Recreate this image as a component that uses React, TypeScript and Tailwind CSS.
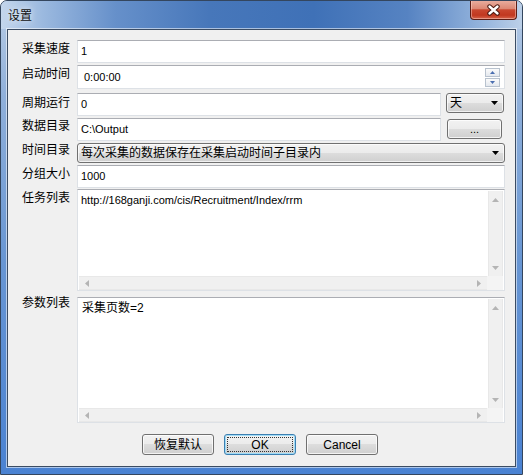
import React from "react";

const FONT = "font-['Liberation_Sans','Noto_Sans_CJK_SC',sans-serif]";

function DownTri({ color = "#000" }: { color?: string }) {
  return (
    <svg width="7" height="4" viewBox="0 0 7 4">
      <path d="M0 0 H7 L3.5 4 Z" fill={color} />
    </svg>
  );
}

function Arrow({ dir }: { dir: "up" | "down" | "left" | "right" }) {
  const d =
    dir === "up"
      ? "M0 4 H7 L3.5 0 Z"
      : dir === "down"
      ? "M0 0 H7 L3.5 4 Z"
      : dir === "left"
      ? "M4 0 V7 L0 3.5 Z"
      : "M0 0 V7 L4 3.5 Z";
  const w = dir === "up" || dir === "down" ? 7 : 4;
  const h = dir === "up" || dir === "down" ? 4 : 7;
  return (
    <svg width={w} height={h} viewBox={`0 0 ${w} ${h}`}>
      <path d={d} fill="#b4b4b4" />
    </svg>
  );
}

function TextBox({ value, h = "h-[23px]", extra = "" }: { value: string; h?: string; extra?: string }) {
  return (
    <div
      className={`${h} flex-1 bg-white border border-[#dde1e6] border-t-[#abadb3] flex items-center pl-[3px] text-[11px] leading-[13px] ${extra}`}
    >
      {value}
    </div>
  );
}

function Combo({ text, w, h = "h-[20px]" }: { text: string; w: string; h?: string }) {
  return (
    <div
      className={`${w} ${h} rounded-[3px] border border-[#707070] bg-[linear-gradient(180deg,#f2f2f2_0%,#ebebeb_50%,#dddddd_50%,#cfcfcf_100%)] shadow-[inset_0_0_0_1px_rgba(255,255,255,0.7)] flex items-center pl-[3px] pr-[5px]`}
    >
      <span className="flex-1 text-[12px] leading-[14px] whitespace-nowrap overflow-hidden">{text}</span>
      <DownTri />
    </div>
  );
}

function Label({ text, cls = "" }: { text: string; cls?: string }) {
  return <div className={`w-[55px] shrink-0 text-[12px] leading-[16px] ${cls}`}>{text}</div>;
}

function ScrollArea({ text, h, tcls }: { text: string; h: string; tcls: string }) {
  return (
    <div className={`${h} flex-1 flex flex-col bg-white border border-[#dde1e6] border-t-[#abadb3]`}>
      <div className="flex-1 flex">
        <div className={`flex-1 pl-[3px] whitespace-nowrap overflow-hidden ${tcls}`}>{text}</div>
        <div className="w-[15px] mr-[1px] mt-[1px] bg-[#f0f0f0] border-x border-[#e8e8e8] flex flex-col justify-between">
          <div className="h-[17px] flex items-center justify-center">
            <Arrow dir="up" />
          </div>
          <div className="h-[17px] flex items-center justify-center">
            <Arrow dir="down" />
          </div>
        </div>
      </div>
      <div className="h-[14px] flex">
        <div className="flex-1 ml-[1px] bg-[#f0f0f0] border-y border-[#e8e8e8] flex items-center justify-between px-[6px]">
          <Arrow dir="left" />
          <Arrow dir="right" />
        </div>
        <div className="w-[16px] mr-[1px] bg-[#f4f4f4]" />
      </div>
    </div>
  );
}

function Btn({ text, def = false }: { text: string; def?: boolean }) {
  return (
    <div
      className={`w-[72px] h-[21px] rounded-[3px] border ${
        def ? "border-[#3c7fb1] shadow-[inset_0_0_0_1px_#9fdcf7]" : "border-[#707070] shadow-[inset_0_0_0_1px_rgba(255,255,255,0.75)]"
      } bg-[linear-gradient(180deg,#f2f2f2_0%,#ebebeb_50%,#dddddd_50%,#cfcfcf_100%)] flex items-center justify-center p-[2px]`}
    >
      <div
        className={`w-full h-full flex items-center justify-center text-[12px] leading-[14px] ${
          def ? "border border-dotted border-[#333]" : "border border-transparent"
        }`}
      >
        {text}
      </div>
    </div>
  );
}

export default function App() {
  return (
    <div
      className={`${FONT} w-[523px] h-[475px] flex flex-col rounded-t-[7px] border border-[#34465e] bg-[linear-gradient(180deg,#b9cde6_0%,#90b0da_20%,#6896d3_55%,#4a82d2_100%)] overflow-hidden text-black`}
    >
      {/* title bar */}
      <div className="h-[28px] flex items-start bg-[linear-gradient(90deg,#c4d6ec_0%,#9bb9df_8%,#6690ca_22%,#4777ba_40%,#3f71b7_60%,#5683c2_78%,#93b3dc_92%,#bcd0e8_100%)]">
        <div className="pl-[7px] pt-[8px] text-[12px] leading-[14px] text-[#111] [text-shadow:0_0_6px_rgba(255,255,255,0.95)]">
          设置
        </div>
        <div className="ml-auto mr-[5px] mt-[-1px] w-[47px] h-[20px] rounded-b-[4px] border border-t-0 border-[#5b1d15] bg-[linear-gradient(180deg,#eab0a2_0%,#dc8874_45%,#c9472f_52%,#c13820_80%,#d6654c_100%)] shadow-[inset_0_0_0_1px_rgba(255,220,210,0.45)] flex items-center justify-center">
          <svg width="15" height="12" viewBox="0 0 15 12">
            <path d="M3.5 2.5 L11.5 9.5 M11.5 2.5 L3.5 9.5" stroke="#4a1810" strokeWidth="4.4" strokeLinecap="round" />
            <path d="M3.5 2.5 L11.5 9.5 M11.5 2.5 L3.5 9.5" stroke="#ffffff" strokeWidth="2.4" strokeLinecap="round" />
          </svg>
        </div>
      </div>

      {/* middle */}
      <div className="flex h-[438px] px-[6px]">
        <div className="w-[509px] h-[438px] border border-[#3b4c63] bg-[#f0f0f0] shadow-[0_0_0_1px_rgba(255,255,255,0.55)] flex flex-col pl-[14px] pr-[10px] pt-[10px]">
          {/* row 1 */}
          <div className="flex items-start">
            <Label text="采集速度" cls="pt-[1px]" />
            <TextBox value="1" />
          </div>
          {/* row 2 */}
          <div className="flex items-start mt-[2px]">
            <Label text="启动时间" cls="pt-[1px]" />
            <div className="h-[24px] flex-1 bg-white border border-[#dde1e6] border-t-[#abadb3] flex items-center pl-[6px] pr-[4px] text-[11px] leading-[13px]">
              <span className="flex-1">0:00:00</span>
              <div className="flex flex-col gap-[1px]">
                <div className="w-[15px] h-[9px] border border-[#b8c2ce] bg-[linear-gradient(180deg,#fbfbfb,#e4e8ee)] flex items-center justify-center">
                  <svg width="5" height="3" viewBox="0 0 5 3">
                    <path d="M0 3 H5 L2.5 0 Z" fill="#4a6eb0" />
                  </svg>
                </div>
                <div className="w-[15px] h-[9px] border border-[#b8c2ce] bg-[linear-gradient(180deg,#fbfbfb,#e4e8ee)] flex items-center justify-center">
                  <svg width="5" height="3" viewBox="0 0 5 3">
                    <path d="M0 0 H5 L2.5 3 Z" fill="#4a6eb0" />
                  </svg>
                </div>
              </div>
            </div>
          </div>
          {/* row 3 */}
          <div className="flex items-start mt-[4px]">
            <Label text="周期运行" cls="pt-[2px]" />
            <TextBox value="0" />
            <div className="ml-[5px] mr-[1px]">
              <Combo text="天" w="w-[58px]" />
            </div>
          </div>
          {/* row 4 */}
          <div className="flex items-start mt-[2px]">
            <Label text="数据目录" />
            <TextBox value="C:\Output" />
            <div className="ml-[6px] mr-[3px] mt-[1px] w-[55px] h-[20px] rounded-[3px] border border-[#707070] bg-[linear-gradient(180deg,#f2f2f2_0%,#ebebeb_50%,#dddddd_50%,#cfcfcf_100%)] shadow-[inset_0_0_0_1px_rgba(255,255,255,0.75)] flex items-center justify-center text-[11px] leading-[13px]">
              ...
            </div>
          </div>
          {/* row 5 */}
          <div className="flex items-start mt-[2px]">
            <Label text="时间目录" cls="mt-[-1px]" />
            <Combo text="每次采集的数据保存在采集启动时间子目录内" w="flex-1" />
          </div>
          {/* row 6 */}
          <div className="flex items-start mt-[2px]">
            <Label text="分组大小" cls="pt-[1px]" />
            <TextBox value="1000" />
          </div>
          {/* row 7 */}
          <div className="flex items-start mt-[1px]">
            <Label text="任务列表" cls="pt-[1px]" />
            <ScrollArea
              text="http://168ganji.com/cis/Recruitment/Index/rrm"
              h="h-[102px]"
              tcls="pt-[3px] text-[11px] leading-[14px]"
            />
          </div>
          {/* row 8 */}
          <div className="flex items-start mt-[6px]">
            <Label text="参数列表" cls="mt-[-2px]" />
            <ScrollArea text="采集页数=2" h="h-[126px]" tcls="pt-[3px] pl-[4px] text-[12px] leading-[15px]" />
          </div>
          {/* buttons */}
          <div className="flex mt-[11px] ml-[120px] gap-[10px]">
            <Btn text="恢复默认" />
            <Btn text="OK" def />
            <Btn text="Cancel" />
          </div>
        </div>
      </div>

      {/* bottom frame */}
      <div className="h-[7px]" />
    </div>
  );
}
